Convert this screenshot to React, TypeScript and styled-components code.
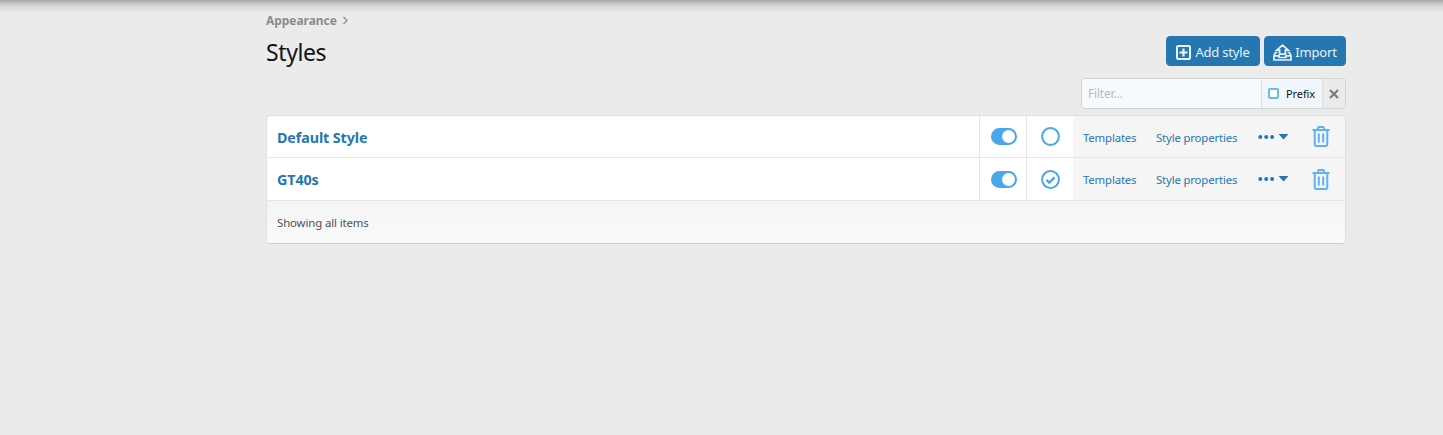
import styled, { createGlobalStyle } from "styled-components"

const Global = createGlobalStyle`
    html, body {
        margin: 0;
        padding: 0;
        background: #ebebeb;
        font-family: "Noto Sans", "Open Sans", sans-serif;
        font-size: 13px;
        color: #141414;
    }
`

const TopShadow = styled.div`
    position: absolute;
    top: 0;
    left: 0;
    right: 0;
    height: 13px;
    background: linear-gradient(to bottom, #a3a3a3 0%, #c4c4c4 25%, #dcdcdc 55%, #ebebeb 100%);
`

const Page = styled.div`
    position: relative;
    width: 1080px;
    height: 435px;
    margin-left: 266px;
    display: flex;
    flex-direction: column;
`

const Breadcrumb = styled.div`
    margin-top: 12px;
    height: 16px;
    display: flex;
    align-items: center;
    gap: 5px;
    font-size: 12px;
    font-weight: 700;
    letter-spacing: -0.05px;
    color: #8c8c8c;
`

const Header = styled.div`
    height: 34px;
    margin-top: 7px;
    display: flex;
    justify-content: space-between;
    align-items: center;
`

const Title = styled.h1`
    margin: 0;
    font-size: 23px;
    font-weight: 400;
    letter-spacing: -0.4px;
    color: #141414;
`

const Actions = styled.div`
    display: flex;
    gap: 4px;
    margin-top: -2px;
`

const Button = styled.button<{ $width: number; $gap: number }>`
    width: ${({ $width }) => $width}px;
    height: 30px;
    padding: 2px 0 0;
    display: flex;
    align-items: center;
    justify-content: center;
    gap: ${({ $gap }) => $gap}px;
    border: 1px solid #2577b1;
    border-radius: 4px;
    background: #2577b1;
    color: #e9f2f8;
    font-family: inherit;
    font-size: 13px;
    letter-spacing: -0.2px;
`

const FilterRow = styled.div`
    display: flex;
    justify-content: flex-end;
    margin-top: 9px;
`

const Filter = styled.div`
    width: 265px;
    height: 31px;
    box-sizing: border-box;
    display: flex;
    border: 1px solid #d3d3d3;
    border-radius: 4px;
    overflow: hidden;
`

const FilterInput = styled.div`
    width: 179px;
    display: flex;
    align-items: center;
    padding-left: 6px;
    box-sizing: border-box;
    background: #f7fbff;
    color: #bcbcbc;
    font-size: 12px;
    letter-spacing: -0.2px;
`

const PrefixBox = styled.div`
    width: 62px;
    display: flex;
    align-items: center;
    gap: 7px;
    padding-left: 6px;
    box-sizing: border-box;
    background: #f0f6fc;
    border-left: 1px solid #dfdfdf;
    border-right: 1px solid #dfdfdf;
    font-size: 11px;
    letter-spacing: -0.1px;
    color: #141414;
`

const CheckBox = styled.span`
    width: 11px;
    height: 11px;
    box-sizing: border-box;
    border: 2px solid #6db8ef;
    border-radius: 2px;
    background: #fff;
`

const ClearButton = styled.div`
    flex: 1;
    display: flex;
    align-items: center;
    justify-content: center;
    background: #ebebeb;
`

const Panel = styled.div`
    margin-top: 6px;
    border: 1px solid #dfdfdf;
    border-bottom-color: #cfcfcf;
    border-radius: 4px;
    overflow: hidden;
    background: #fff;
`

const Row = styled.div`
    height: 42px;
    box-sizing: border-box;
    display: flex;
    border-bottom: 1px solid #e6e6e6;
    a {
        padding-top: 2px;
    }
    &:nth-child(2) {
        height: 43px;
        a {
            padding-top: 0;
        }
    }
`

const NameCell = styled.a`
    flex: 1;
    display: flex;
    align-items: center;
    padding-left: 10px;
    font-size: 14.3px;
    font-weight: 700;
    letter-spacing: -0.1px;
    color: #2577b1;
`

const IconCell = styled.div`
    width: 46px;
    display: flex;
    align-items: center;
    justify-content: center;
    border-left: 1px solid #e6e6e6;
`

const Toggle = styled.span`
    width: 26px;
    height: 17px;
    margin-left: 1px;
    border-radius: 9px;
    background: #47a7eb;
    display: flex;
    align-items: center;
    justify-content: flex-end;
    padding-right: 2px;
    box-sizing: border-box;
    &::after {
        content: "";
        width: 13px;
        height: 13px;
        border-radius: 50%;
        background: #fff;
    }
`

const Tools = styled.div`
    width: 272px;
    display: flex;
    align-items: center;
    background: #f5f5f5;
    font-size: 11.4px;
    letter-spacing: -0.17px;
    color: #2577b1;
`

const ToolLink = styled.a<{ $width: number }>`
    width: ${({ $width }) => $width}px;
    flex: none;
    padding-left: 10px;
    box-sizing: border-box;
`

const More = styled.div`
    width: 54px;
    flex: none;
    display: flex;
    align-items: center;
    padding-left: 11px;
    box-sizing: border-box;
`

const Trash = styled.div`
    flex: 1;
    display: flex;
    justify-content: center;
    margin-left: -4px;
`

const Footer = styled.div`
    height: 42px;
    display: flex;
    align-items: center;
    padding-left: 10px;
    background: linear-gradient(to bottom, #f5f5f5, #fafafa);
    font-size: 11.4px;
    letter-spacing: -0.12px;
    color: #505050;
`

const PlusIcon = () => (
    <svg width="15" height="15" viewBox="0 0 15 15" fill="none" stroke="#e9f2f8" strokeWidth="2">
        <rect x="1" y="1" width="13" height="13" rx="1.2" />
        <path d="M7.5 3.5v8M3.5 7.5h8" strokeWidth="2.2" />
    </svg>
)

const ImportIcon = () => (
    <svg width="19" height="17" viewBox="0 0 19 17" fill="none" stroke="#e9f2f8" strokeWidth="1.7">
        <path d="M9.5 1.2 L15.2 6.2 H12.4 V10.2 H6.6 V6.2 H3.8 Z" />
        <path d="M4.5 8.5 H2.5 L1 11.5 V16 H18 V11.5 L16.5 8.5 H14.5" />
        <path d="M1 11.8 H6 V13.5 H13 V11.8 H18" />
    </svg>
)

const CloseIcon = () => (
    <svg width="10" height="10" viewBox="0 0 10 10" stroke="#7c7c7c" strokeWidth="2.2">
        <path d="M1 1l8 8M9 1l-8 8" />
    </svg>
)

const RadioIcon = ({ checked }: { checked: boolean }) => (
    <svg width="19" height="19" viewBox="0 0 19 19" fill="none" stroke="#47a7eb" strokeWidth="2">
        <circle cx="9.5" cy="9.5" r="8.4" />
        {checked && <path d="M5.4 9.8l2.9 2.8 5.3-5.2" strokeWidth="2.3" />}
    </svg>
)

const MoreIcon = () => (
    <svg width="31" height="8" viewBox="0 0 31 8" fill="#2577b1">
        <circle cx="2.3" cy="4" r="2" />
        <circle cx="8.2" cy="4" r="2" />
        <circle cx="14.1" cy="4" r="2" />
        <path d="M20.5 1h10l-5 5.6z" />
    </svg>
)

const TrashIcon = () => (
    <svg width="18" height="21" viewBox="0 0 18 21" fill="none" stroke="#5fb2ee" strokeWidth="2">
        <path d="M.5 4h17" />
        <path d="M6 4V2.2c0-.7.5-1.2 1.2-1.2h3.6c.7 0 1.2.5 1.2 1.2V4" />
        <path d="M2.7 4v14.6c0 .8.6 1.4 1.4 1.4h9.8c.8 0 1.4-.6 1.4-1.4V4" />
        <path d="M6.8 7.5v9M11.2 7.5v9" />
    </svg>
)

const styles = [
    { name: "Default Style", active: false },
    { name: "GT40s", active: true },
]

export default function App() {
    return (
        <>
            <Global />
            <TopShadow />
            <Page>
                <Breadcrumb>
                    Appearance
                    <svg width="7" height="9" viewBox="0 0 7 9" fill="none" stroke="#8c8c8c" strokeWidth="1.2">
                        <path d="M1.5 1l3.5 3.5-3.5 3.5" />
                    </svg>
                </Breadcrumb>
                <Header>
                    <Title>Styles</Title>
                    <Actions>
                        <Button $width={94} $gap={4}>
                            <PlusIcon />
                            Add style
                        </Button>
                        <Button $width={82} $gap={3}>
                            <ImportIcon />
                            Import
                        </Button>
                    </Actions>
                </Header>
                <FilterRow>
                    <Filter>
                        <FilterInput>Filter...</FilterInput>
                        <PrefixBox>
                            <CheckBox />
                            Prefix
                        </PrefixBox>
                        <ClearButton>
                            <CloseIcon />
                        </ClearButton>
                    </Filter>
                </FilterRow>
                <Panel>
                    {styles.map((s) => (
                        <Row key={s.name}>
                            <NameCell>{s.name}</NameCell>
                            <IconCell>
                                <Toggle />
                            </IconCell>
                            <IconCell>
                                <RadioIcon checked={s.active} />
                            </IconCell>
                            <Tools>
                                <ToolLink $width={73}>Templates</ToolLink>
                                <ToolLink $width={101}>Style properties</ToolLink>
                                <More>
                                    <MoreIcon />
                                </More>
                                <Trash>
                                    <TrashIcon />
                                </Trash>
                            </Tools>
                        </Row>
                    ))}
                    <Footer>Showing all items</Footer>
                </Panel>
            </Page>
        </>
    )
}
